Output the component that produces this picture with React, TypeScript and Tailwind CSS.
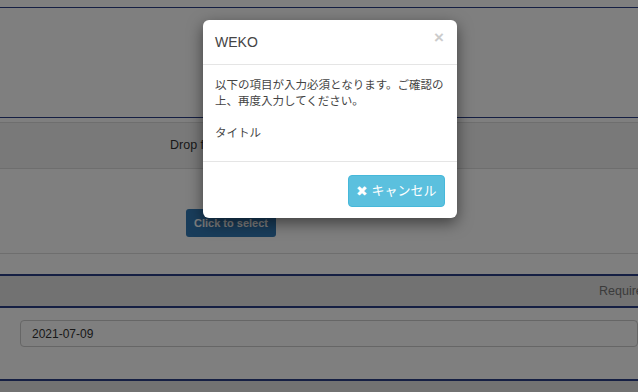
const font = "font-['Liberation_Sans','Noto_Sans_CJK_JP',sans-serif]";

function Page() {
  return (
    <div className="flex flex-col bg-white">
      {/* top panel */}
      <div className="h-[7px]" />
      <div className="h-[111px] border-y border-[#2b3f86]" />
      <div className="h-[4px]" />

      {/* file drop zone */}
      <div className="flex flex-col border-y border-[#dddddd]">
        <div className="flex h-[46px] items-center border-b border-[#dddddd] bg-[#f2f2f2] pl-[170px] text-[12.5px] text-[#333]">
          <span className="whitespace-nowrap">Drop files here or</span>
        </div>
        <div className="flex h-[84px] items-start pl-[186px] pt-[40px]">
          <button className="h-[28px] w-[90px] rounded-[3px] bg-[#337ab7] text-[11px] font-bold text-white">
            Click to select
          </button>
        </div>
      </div>
      <div className="h-[20px]" />

      {/* date panel */}
      <div className="flex flex-col border-y-2 border-[#2b3f86]">
        <div className="flex h-[32px] items-center border-b-2 border-[#2b3f86] bg-[#e4e4e4] pl-[599px] text-[12.5px] text-[#777]">
          <span className="whitespace-nowrap">Required</span>
        </div>
        <div className="flex h-[71px] pl-[20px] pt-[12px]">
          <div className="flex h-[27px] flex-1 items-center rounded-[4px] border border-[#cccccc] bg-white pl-[11px] text-[12px] text-[#333]">
            2021-07-09
          </div>
        </div>
      </div>
      <div className="h-[20px] bg-[#e4e4e4]" />
    </div>
  );
}

function Modal() {
  return (
    <div className="absolute left-[203px] top-[20px] w-[254px] rounded-[6px] bg-white shadow-[0_5px_15px_rgba(0,0,0,0.5)]">
      <div className="flex h-[45px] items-center justify-between border-b border-[#e5e5e5] pl-[12px] pr-[13px]">
        <h4 className="text-[14px] text-[#444]">WEKO</h4>
        <span className="-mt-[10px] text-[17px] font-bold leading-none text-[#cccccc]">×</span>
      </div>
      <div className="border-b border-[#e5e5e5] pb-[20px] pl-[12px] pt-[12px] text-[11.5px] leading-[16px] text-[#444]">
        <p className="whitespace-nowrap">
          以下の項目が入力必須となります。ご確認の
          <br />
          上、再度入力してください。
          <br />
          <br />
          タイトル
        </p>
      </div>
      <div className="flex justify-end pb-[11px] pr-[12px] pt-[13px]">
        <button className="flex h-[32px] w-[97px] items-center justify-center gap-[3px] rounded-[4px] border border-[#46b8da] bg-[#5bc0de] text-[13px] text-white">
          <span className="text-[14px] leading-none">✖</span>
          <span>キャンセル</span>
        </button>
      </div>
    </div>
  );
}

export default function App() {
  return (
    <div className={`relative h-[392px] w-[638px] overflow-hidden ${font}`}>
      <Page />
      <div className="absolute inset-0 bg-black/50" />
      <Modal />
    </div>
  );
}
